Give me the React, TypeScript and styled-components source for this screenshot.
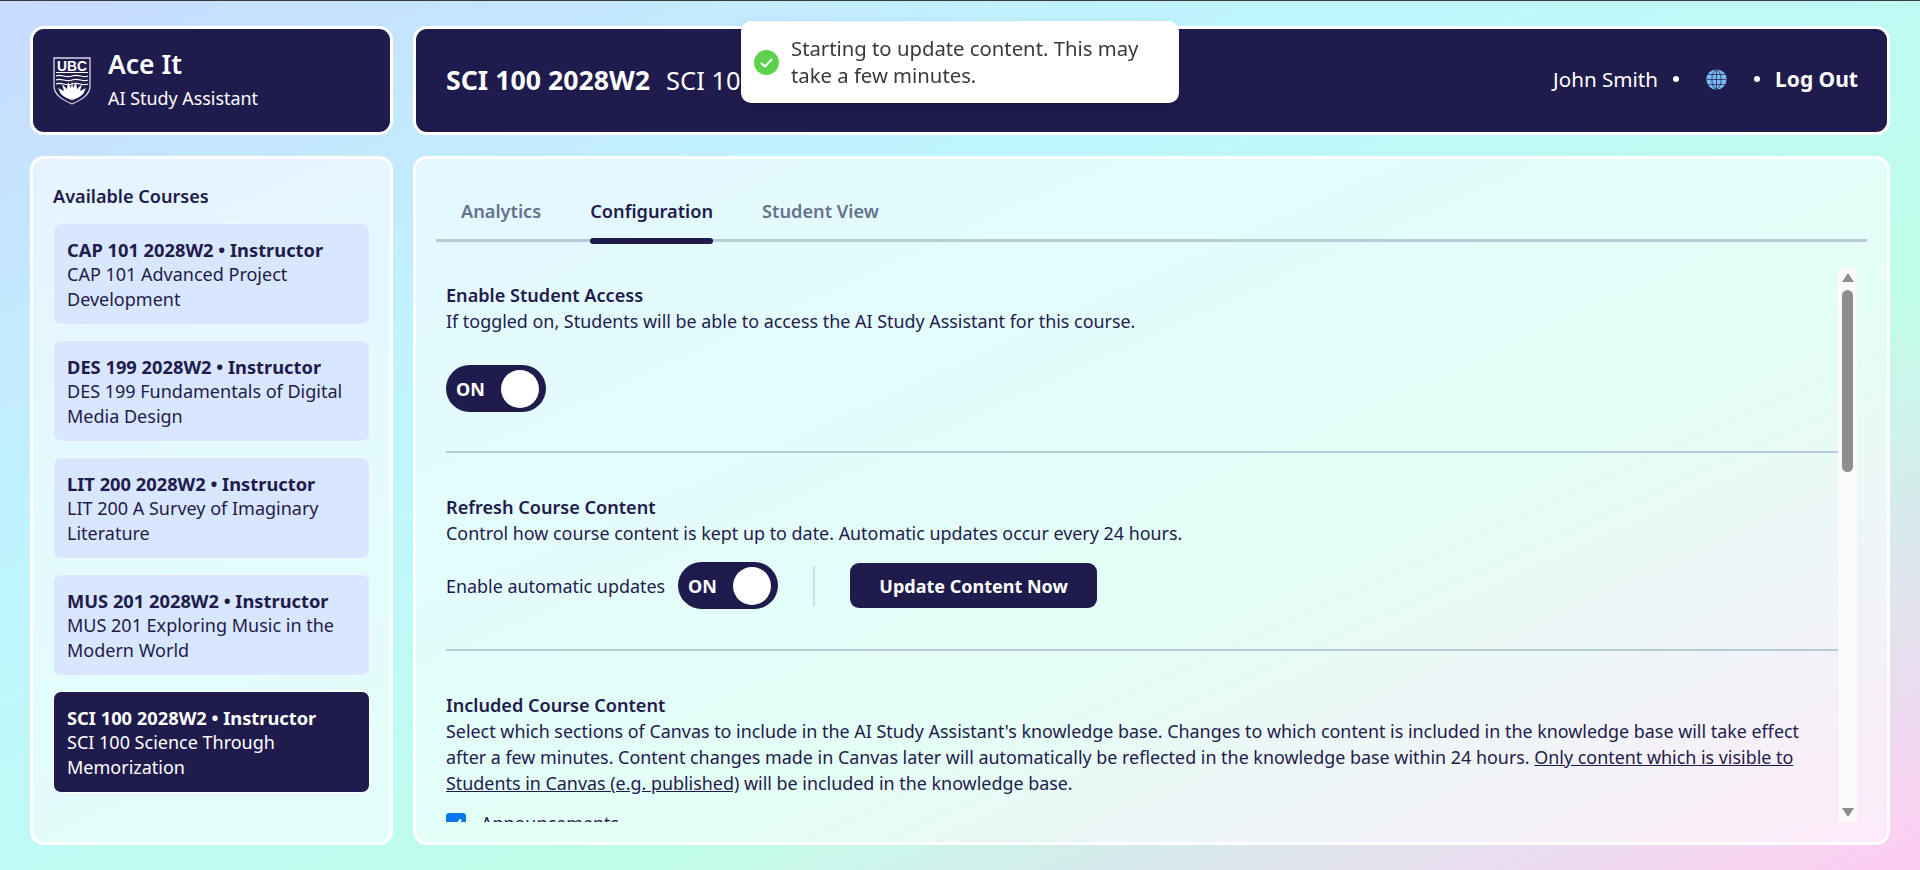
import styled, { createGlobalStyle } from 'styled-components';

const NAVY = '#1f1b4c';
const FONT = '"Noto Sans", "Open Sans", sans-serif';

const GlobalStyle = createGlobalStyle`
  html, body {
    margin: 0;
    height: 100%;
    overflow: hidden;
  }
  body {
    font-family: ${FONT};
    color: ${NAVY};
  }
  * {
    box-sizing: border-box;
  }
`;

const Page = styled.div`
  width: 1920px;
  height: 870px;
  border-top: 1px solid #3a3a3a;
  padding: 25px 30px 25px 30px;
  display: grid;
  grid-template-columns: 363px 1fr;
  grid-template-rows: 109px 689px;
  column-gap: 20px;
  row-gap: 21px;
  background: linear-gradient(to bottom right, #c9dbff 0%, #bff5ff 33%, #bffee9 66%, #ffccf2 100%);
`;

const HeaderCard = styled.header`
  background: ${NAVY};
  border: 3px solid #fff;
  border-radius: 14px;
  color: #fff;
  display: flex;
  align-items: center;
`;

const BrandCard = styled(HeaderCard)`
  padding-left: 20px;
  gap: 17px;
`;

const BrandText = styled.div`
  display: flex;
  flex-direction: column;
  gap: 5px;
  margin-bottom: 4px;
`;

const BrandTitle = styled.div`
  font-size: 26.5px;
  line-height: 34px;
  font-weight: 600;
`;

const BrandSub = styled.div`
  font-size: 17.9px;
  line-height: 24px;
`;

const TopBar = styled(HeaderCard)`
  justify-content: space-between;
  padding: 0 29px 3px 30px;
`;

const CourseHeading = styled.div`
  font-size: 25.5px;
  white-space: nowrap;
  b {
    font-size: 26.7px;
    font-weight: 700;
    margin-right: 16px;
  }
`;

const UserMenu = styled.div`
  display: flex;
  align-items: center;
  font-size: 20.6px;
`;

const Dot = styled.span<{ $gap: number }>`
  width: 6px;
  height: 6px;
  border-radius: 50%;
  background: #fff;
  margin: 0 ${(p) => p.$gap}px 0 ${(p) => (p.$gap > 20 ? 15 : 27)}px;
`;

const LogOut = styled.span`
  font-size: 21px;
  font-weight: 700;
`;

const GlassPanel = styled.section`
  border: 3px solid #fff;
  border-radius: 14px;
  background: rgba(255, 255, 255, 0.56);
  min-height: 0;
  overflow: hidden;
`;

const Sidebar = styled(GlassPanel)`
  padding: 25px 20px;
  display: flex;
  flex-direction: column;
`;

const SidebarTitle = styled.h2`
  margin: 0 0 15px;
  font-size: 18.1px;
  line-height: 24px;
  font-weight: 600;
`;

const CourseList = styled.div`
  display: flex;
  flex-direction: column;
  gap: 15px;
`;

const CourseCard = styled.div<{ $active?: boolean }>`
  height: 102px;
  padding: 13px 13px;
  border-radius: 8px;
  font-size: 18px;
  line-height: 25px;
  border: 1px solid ${(p) => (p.$active ? '#fff' : 'rgba(255,255,255,0.7)')};
  background: ${(p) => (p.$active ? NAVY : '#d8e6ff')};
  color: ${(p) => (p.$active ? '#fff' : NAVY)};
  b {
    display: block;
    font-size: 18.3px;
    font-weight: 700;
  }
`;

const Main = styled(GlassPanel)`
  padding: 22px 20px 20px;
  display: flex;
  flex-direction: column;
`;

const TabBar = styled.nav`
  display: flex;
  gap: 49px;
  border-bottom: 3px solid #b6ccd6;
  padding-left: 25px;
  height: 61px;
  flex-shrink: 0;
`;

const TabItem = styled.div<{ $active?: boolean }>`
  position: relative;
  font-size: 18.2px;
  line-height: 24px;
  padding-top: 18px;
  font-weight: 600;
  color: ${(p) => (p.$active ? NAVY : '#68718f')};
  ${(p) =>
    p.$active &&
    `&::after {
      content: '';
      position: absolute;
      left: 0;
      right: 0;
      bottom: -5px;
      height: 6px;
      border-radius: 3px;
      background: ${NAVY};
    }`}
`;

const ScrollArea = styled.div`
  flex: 1;
  min-height: 0;
  margin-top: 25px;
  margin-right: 10px;
  display: flex;
`;

const ScrollContent = styled.div`
  flex: 1;
  min-width: 0;
  overflow: hidden;
  padding: 15px 0 0 10px;
`;

const ScrollTrack = styled.div`
  width: 19px;
  background: #fafafa;
  display: flex;
  flex-direction: column;
  align-items: center;
  padding: 6px 0 5px;
`;

const ArrowUp = styled.div`
  width: 0;
  height: 0;
  border-left: 6px solid transparent;
  border-right: 6px solid transparent;
  border-bottom: 9px solid #8e8e8e;
`;

const ArrowDown = styled.div`
  width: 0;
  height: 0;
  margin-top: auto;
  border-left: 6px solid transparent;
  border-right: 6px solid transparent;
  border-top: 9px solid #8e8e8e;
`;

const ScrollThumb = styled.div`
  width: 11px;
  height: 182px;
  margin-top: 8px;
  border-radius: 6px;
  background: #8e8e8e;
`;

const Section = styled.div<{ $pad: number }>`
  padding-bottom: ${(p) => p.$pad}px;
  margin-bottom: 41px;
  border-bottom: 2px solid #b6ccd6;
  &:last-child {
    border-bottom: 0;
    margin-bottom: 0;
  }
`;

const SectionTitle = styled.h3`
  margin: 0;
  font-size: 18.1px;
  line-height: 26px;
  font-weight: 600;
`;

const SectionText = styled.p`
  margin: 0;
  font-size: 17.9px;
  line-height: 26px;
  width: 1375px;
  a {
    color: inherit;
    text-decoration: underline;
  }
`;

const Toggle = styled.div`
  width: 100px;
  height: 47px;
  padding: 0 7px 0 10px;
  border-radius: 24px;
  background: ${NAVY};
  color: #fff;
  font-size: 18px;
  font-weight: 700;
  display: flex;
  align-items: center;
  justify-content: space-between;
  flex-shrink: 0;
`;

const Knob = styled.span`
  width: 38px;
  height: 38px;
  border-radius: 50%;
  background: #fff;
`;

const AccessToggle = styled.div`
  margin-top: 31px;
`;

const UpdateRow = styled.div`
  margin-top: 16px;
  display: flex;
  align-items: center;
  font-size: 17.9px;
`;

const RowLabel = styled.span`
  margin-right: 13px;
`;

const RowDivider = styled.span`
  width: 2px;
  height: 40px;
  margin: 0 35px;
  background: #c9dfe2;
`;

const UpdateButton = styled.button`
  width: 247px;
  height: 45px;
  border: 0;
  border-radius: 9px;
  background: ${NAVY};
  color: #fff;
  font: 700 18px ${FONT};
`;

const CheckRow = styled.label`
  margin-top: 15px;
  display: flex;
  align-items: center;
  gap: 15px;
  font-size: 17.9px;
`;

const CheckBox = styled.span`
  width: 20px;
  height: 20px;
  border-radius: 3px;
  background: #0b76ef;
  display: flex;
  align-items: center;
  justify-content: center;
`;

const Toast = styled.div`
  position: fixed;
  left: 741px;
  top: 21px;
  width: 438px;
  height: 82px;
  padding: 0 20px 0 13px;
  border-radius: 10px;
  background: #fff;
  color: #3a3a3a;
  font-size: 20.3px;
  line-height: 27px;
  display: flex;
  align-items: center;
  gap: 12px;
  box-shadow: 0 4px 12px rgba(0, 0, 0, 0.12);
`;

const courses = [
  { code: 'CAP 101 2028W2', name: 'CAP 101 Advanced Project Development' },
  { code: 'DES 199 2028W2', name: 'DES 199 Fundamentals of Digital Media Design' },
  { code: 'LIT 200 2028W2', name: 'LIT 200 A Survey of Imaginary Literature' },
  { code: 'MUS 201 2028W2', name: 'MUS 201 Exploring Music in the Modern World' },
  { code: 'SCI 100 2028W2', name: 'SCI 100 Science Through Memorization', active: true },
];

const UbcLogo = () => (
  <svg width="38" height="48" viewBox="0 0 38 48" fill="none">
    <path d="M1 1H37V29C37 38 28 43 19 47C10 43 1 38 1 29Z" stroke="#d9d8e6" strokeWidth="1.3" fill={NAVY} />
    <text x="19" y="13.5" textAnchor="middle" textLength="30" lengthAdjust="spacingAndGlyphs" fill="#fff" fontFamily="Liberation Sans" fontWeight="700" fontSize="14">UBC</text>
    <path d="M3 15.5H35" stroke="#fff" strokeWidth="1" />
    <path d="M3 19C8 16.5 13 21.5 19 19C25 16.5 30 21.5 35 19M3 23C8 20.5 13 25.5 19 23C25 20.5 30 25.5 35 23M3 27C8 24.5 13 29.5 19 27C25 24.5 30 29.5 35 27" stroke="#fff" strokeWidth="1.2" />
    <path d="M5 31L11 34L9 27L14 32L15 25L18 31L19 24L20 31L23 25L24 32L29 27L27 34L33 31L30 37C27 40 23 42 19 43C15 42 11 40 8 37Z" fill="#fff" />
  </svg>
);

const GlobeIcon = () => (
  <svg width="21" height="21" viewBox="0 0 20 20" fill="none">
    <circle cx="10" cy="10" r="9.6" fill="#78bbf2" />
    <g stroke={NAVY} strokeWidth="0.7">
      <ellipse cx="10" cy="10" rx="4.4" ry="9" />
      <path d="M10 1V19M1 10H19M2.4 5.2H17.6M2.4 14.8H17.6" />
    </g>
  </svg>
);

const App = () => (
  <Page>
    <GlobalStyle />
    <BrandCard>
      <UbcLogo />
      <BrandText>
        <BrandTitle>Ace It</BrandTitle>
        <BrandSub>AI Study Assistant</BrandSub>
      </BrandText>
    </BrandCard>
    <TopBar>
      <CourseHeading>
        <b>SCI 100 2028W2</b>SCI 100 Science Through Memorization
      </CourseHeading>
      <UserMenu>
        John Smith
        <Dot $gap={27} />
        <GlobeIcon />
        <Dot $gap={15} />
        <LogOut>Log Out</LogOut>
      </UserMenu>
    </TopBar>
    <Sidebar>
      <SidebarTitle>Available Courses</SidebarTitle>
      <CourseList>
        {courses.map((c) => (
          <CourseCard key={c.code} $active={c.active}>
            <b>{c.code} • Instructor</b>
            {c.name}
          </CourseCard>
        ))}
      </CourseList>
    </Sidebar>
    <Main>
      <TabBar>
        <TabItem>Analytics</TabItem>
        <TabItem $active>Configuration</TabItem>
        <TabItem>Student View</TabItem>
      </TabBar>
      <ScrollArea>
        <ScrollContent>
          <Section $pad={39}>
            <SectionTitle>Enable Student Access</SectionTitle>
            <SectionText>If toggled on, Students will be able to access the AI Study Assistant for this course.</SectionText>
            <AccessToggle>
              <Toggle>ON<Knob /></Toggle>
            </AccessToggle>
          </Section>
          <Section $pad={40}>
            <SectionTitle>Refresh Course Content</SectionTitle>
            <SectionText>Control how course content is kept up to date. Automatic updates occur every 24 hours.</SectionText>
            <UpdateRow>
              <RowLabel>Enable automatic updates</RowLabel>
              <Toggle>ON<Knob /></Toggle>
              <RowDivider />
              <UpdateButton>Update Content Now</UpdateButton>
            </UpdateRow>
          </Section>
          <Section $pad={0}>
            <SectionTitle>Included Course Content</SectionTitle>
            <SectionText>
              Select which sections of Canvas to include in the AI Study Assistant's knowledge base. Changes to which content is included in the knowledge base will take effect after a few minutes. Content changes made in Canvas later will automatically be reflected in the knowledge base within 24 hours. <a>Only content which is visible to Students in Canvas (e.g. published)</a> will be included in the knowledge base.
            </SectionText>
            <CheckRow>
              <CheckBox>
                <svg width="14" height="14" viewBox="0 0 14 14" fill="none">
                  <path d="M2 7.5L5.5 11L12 3.5" stroke="#fff" strokeWidth="2.2" />
                </svg>
              </CheckBox>
              Announcements
            </CheckRow>
          </Section>
        </ScrollContent>
        <ScrollTrack>
          <ArrowUp />
          <ScrollThumb />
          <ArrowDown />
        </ScrollTrack>
      </ScrollArea>
    </Main>
    <Toast>
      <svg width="25" height="25" viewBox="0 0 25 25" style={{ flexShrink: 0 }}>
        <circle cx="12.5" cy="12.5" r="12.5" fill="#5ed24c" />
        <path d="M7 13L11 16.5L18 9" stroke="#fff" strokeWidth="2" fill="none" />
      </svg>
      Starting to update content. This may take a few minutes.
    </Toast>
  </Page>
);

export default App;
